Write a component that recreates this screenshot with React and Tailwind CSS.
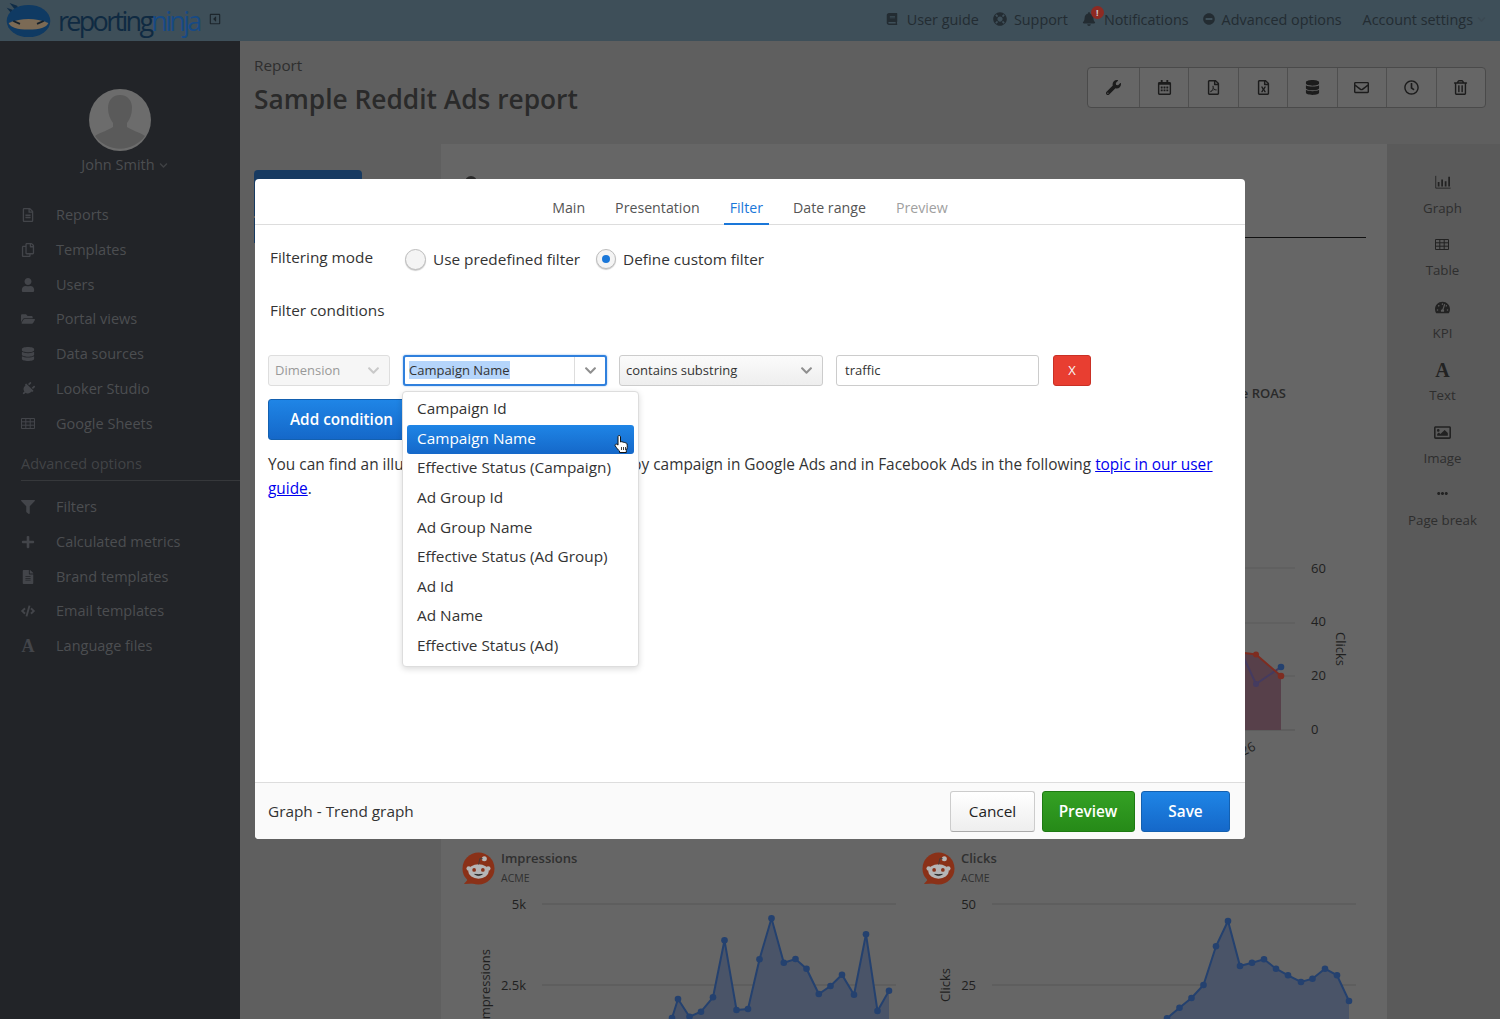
import React from 'react';
import {
  FaBook, FaLifeRing, FaBell, FaMinusCircle, FaChevronDown, FaWrench, FaRegCalendarAlt, FaRegFilePdf,
  FaRegFileExcel, FaDatabase, FaRegEnvelope, FaRegClock, FaRegTrashAlt, FaRegFileAlt, FaRegCopy, FaUser,
  FaFolderOpen, FaPlug, FaFilter, FaPlus, FaFileAlt, FaCode, FaTachometerAlt,
  FaRegImage, FaEllipsisH, FaRegCaretSquareLeft,
} from 'react-icons/fa';

const SerifA = ({ className }) => (
  <span className={`font-['Liberation_Serif',serif] font-bold leading-none ${className}`}>A</span>
);

const GridIcon = ({ className }) => (
  <svg viewBox="0 0 14 11" className={className} fill="none" stroke="currentColor" strokeWidth="1">
    <path d="M.5.5h13v10H.5zM.5 3.800h13M.5 7.200h13M4.800.5v10M9.200.5v10" />
  </svg>
);

const AngledPlug = ({ className }) => <FaPlug className={`rotate-45 ${className}`} />;

const mainNav = [
  [FaRegFileAlt, 'Reports', 'h-[34px]'],
  [FaRegCopy, 'Templates', 'h-[35px]'],
  [FaUser, 'Users', 'h-[35px]'],
  [FaFolderOpen, 'Portal views', 'h-[34px]'],
  [FaDatabase, 'Data sources', 'h-[35px]'],
  [AngledPlug, 'Looker Studio', 'h-[35px]'],
  [GridIcon, 'Google Sheets', 'h-[35px]'],
];

const advancedNav = [
  [FaFilter, 'Filters', 'h-[34px]'],
  [FaPlus, 'Calculated metrics', 'h-[35px]'],
  [FaFileAlt, 'Brand templates', 'h-[35px]'],
  [FaCode, 'Email templates', 'h-[34px]'],
  [SerifA, 'Language files', 'h-[35px]'],
];

const toolbar = [FaWrench, FaRegCalendarAlt, FaRegFilePdf, FaRegFileExcel, FaDatabase, FaRegEnvelope, FaRegClock, FaRegTrashAlt];

const dropdownItems = [
  'Campaign Id', 'Campaign Name', 'Effective Status (Campaign)', 'Ad Group Id', 'Ad Group Name',
  'Effective Status (Ad Group)', 'Ad Id', 'Ad Name', 'Effective Status (Ad)',
];

const impressionPoints = [[230, 125], [236, 106], [247.5, 123.7], [259, 118.7], [271, 104.3], [282.5, 47.3], [294.5, 117], [306, 116], [317.5, 66.3], [329.5, 25.3], [341.8, 69.7], [353.5, 66], [364.5, 75.7], [376.8, 101], [388.5, 93], [400, 81.7], [412, 101.7], [424, 41.3], [435.5, 118], [447, 97.7]];
const clickPoints = [[245, 125.3], [257.5, 114.7], [269.5, 105], [281.5, 92], [294, 53.3], [306, 28], [318, 73], [330, 69.7], [342, 66.3], [354, 75.7], [366, 82.3], [379, 89], [390.5, 85.7], [403, 75.7], [415, 82.3], [427, 108]];

const GraphIcon = ({ className }) => (
  <svg viewBox="0 0 18 16" className={className} fill="none">
    <path d="M.7 1v14h17" stroke="currentColor" strokeWidth="1" />
    <path d="M3 8h2v5H3zM7 5h2v8H7zM11 7h2v6h-2zM15 2h2v11h-2z" fill="currentColor" />
  </svg>
);

const HeadLogo = () => (
  <svg viewBox="0 0 48 38" className="h-[36px] w-[47px] shrink-0">
    <path d="M9 6 L4 0 L12 3 L14 7z M7 7 L1 5 L6 11z" fill="#0f2c47" />
    <ellipse cx="24" cy="19" rx="23" ry="17" fill="#0f3a63" />
    <path d="M3 21 Q24 13 45 21 Q42 28 24 28 Q6 28 3 21z" fill="#7b6a55" />
    <path d="M8 19l7 3M40 19l-7 3" stroke="#14202b" strokeWidth="2" />
  </svg>
);

const RedditLogo = () => (
  <svg viewBox="0 0 34 34" className="h-[33px] w-[33px] shrink-0">
    <circle cx="17" cy="17" r="16.5" fill="#8a3118" />
    <path d="M2 33l5-6 6 5.500z" fill="#8a3118" />
    <ellipse cx="17" cy="20" rx="10.500" ry="7.500" fill="#b5b5b5" />
    <circle cx="7" cy="17" r="2.400" fill="#b5b5b5" />
    <circle cx="27" cy="17" r="2.400" fill="#b5b5b5" />
    <circle cx="23" cy="7" r="2.600" fill="#b5b5b5" />
    <path d="M17 13l1.500-6.500 3 .5" stroke="#3a3a3a" strokeWidth=".8" fill="none" />
    <circle cx="12.500" cy="18.500" r="1.900" fill="#8a3118" />
    <circle cx="21.500" cy="18.500" r="1.900" fill="#8a3118" />
    <path d="M13 23q4 2.600 8 0q-4 .6-8 0z" fill="#222" stroke="#222" strokeWidth=".7" />
  </svg>
);

const HandCursor = () => (
  <svg viewBox="0 0 16 20" className="absolute right-[4px] top-[9px] h-[20px] w-[16px]">
    <path d="M5 1.500c1 0 1.500.7 1.500 1.500v5l1-.3c.8 0 1.200.2 1.500.7.7-.3 1.600-.2 2 .5.800-.3 1.800.2 2 1 .5 2.500.3 4.600-.7 6.600v2H5.500v-1.500C4 16 2.800 14 1.300 12c-.6-.9 0-1.900 1-1.900.6 0 1.200.5 1.700 1V3c0-.8.200-1.500 1-1.500z" fill="#fff" stroke="#111" strokeWidth="1" />
    <path d="M7.500 13v3M9.500 13v3M11.500 13v3" stroke="#111" strokeWidth=".8" />
  </svg>
);

const AreaChart = ({ points, left, right, ticks, label, labelX, labelY }) => {
  const line = points.map(([x, y]) => `${x},${y}`).join(' ');
  const first = points[0][0];
  const last = points[points.length - 1][0];
  return (
    <svg viewBox="0 0 460 126" className="h-[126px] w-[460px] shrink-0">
      {ticks.map(([text, y]) => (
        <g key={text}>
          <line x1={left} x2={right} y1={y} y2={y} stroke="#575757" strokeWidth="1" />
          <text x={left - 16} y={y + 5} textAnchor="end" fontSize="13" fill="#1f1f1f">{text}</text>
        </g>
      ))}
      <polygon points={`${first},126 ${line} ${last},126`} fill="#4a5468" />
      <polyline points={line} fill="none" stroke="#24416f" strokeWidth="2" />
      {points.map(([x, y]) => <circle key={x} cx={x} cy={y} r="3.300" fill="#24416f" />)}
      <text transform={`translate(${labelX} ${labelY}) rotate(-90)`} fontSize="13" fill="#1f1f1f">{label}</text>
    </svg>
  );
};

const ChartPanel = ({ title, children }) => (
  <div className="w-[460px] shrink-0">
    <div className="flex h-[41px] items-start gap-[6px]">
      <RedditLogo />
      <div className="-mt-[4px]">
        <div className="text-[13px] font-semibold leading-[20px] text-[#303030]">{title}</div>
        <div className="text-[10.500px] leading-[20px] text-[#303030]">ACME</div>
      </div>
    </div>
    {children}
  </div>
);

const SideItem = ({ Icon, label, h }) => (
  <div className={`flex items-center ${h}`}>
    <span className="flex w-[14px] items-center justify-center text-[#43454a]">
      <Icon className={Icon === SerifA ? 'text-[18px]' : Icon === GridIcon ? 'h-[11px] w-[14px]' : 'text-[14px]'} />
    </span>
    <span className="ml-[21px]">{label}</span>
  </div>
);

const App = () => {
  return (
    <div className="relative h-[1019px] w-full overflow-hidden bg-[#5f5f5f] font-['Open_Sans',sans-serif] text-[#2c2c2c]">
      {/* top bar */}
      <header className="flex h-[41px] items-center bg-[#3e4f59] pl-[5px] pr-[14px] text-[14.400px] text-[#232c32]">
        <HeadLogo />
        <span className="ml-[6px] text-[27px] leading-none tracking-[-2.700px] text-[#0f2a42]">reporting</span>
        <span className="text-[27px] leading-none tracking-[-2.700px] text-[#174a85]">ninja</span>
        <FaRegCaretSquareLeft className="ml-[9px] -mt-[3px] text-[12px] text-[#1d262c]" />
        <nav className="ml-auto flex items-center pb-[2px]">
          <FaBook className="text-[12px]" />
          <span className="ml-[9px]">User guide</span>
          <FaLifeRing className="ml-[14px] text-[14px]" />
          <span className="ml-[7px]">Support</span>
          <span className="relative ml-[14px]">
            <FaBell className="text-[14px]" />
            <span className="absolute -right-[8px] -top-[6px] flex h-[13px] w-[13px] items-center justify-center rounded-full bg-[#8e2a22] text-[9px] font-bold leading-none text-[#c9c9c9]">!</span>
          </span>
          <span className="ml-[8px]">Notifications</span>
          <FaMinusCircle className="ml-[14px] text-[12px]" />
          <span className="ml-[7px]">Advanced options</span>
          <span className="ml-[21px]">Account settings</span>
          <FaChevronDown className="ml-[4px] text-[9px] text-[#3b4952]" />
        </nav>
      </header>

      <div className="flex h-[978px]">
        {/* sidebar */}
        <aside className="w-[240px] shrink-0 bg-[#222428] text-[14.500px] text-[#4c4e51]">
          <div className="flex flex-col items-center pt-[48px]">
            <div className="relative h-[62px] w-[62px] overflow-hidden rounded-full bg-[#6c6c6c]">
              <svg viewBox="0 0 62 62" className="h-full w-full">
                <path d="M31 6c8 0 12 6 12 13 0 6-2 11-5 15v4c4 3 12 5 18 9a31 31 0 0 1-50 0c6-4 14-6 18-9v-4c-3-4-5-9-5-15 0-7 4-13 12-13z" fill="#5a5a5a" />
              </svg>
            </div>
            <div className="mt-[2px] flex items-center gap-[4px] pl-[9px] text-[14.500px] leading-[24px]">
              John Smith <FaChevronDown className="text-[9px] text-[#3f4144]" />
            </div>
          </div>
          <nav className="mt-[21px] pl-[21px]">
            {mainNav.map(([Icon, label, h]) => <SideItem key={label} Icon={Icon} label={label} h={h} />)}
            <div className="mt-[3px] h-[37px] border-b border-[#36383b] pt-[10px] leading-[20px] text-[#414346]">Advanced options</div>
            <div className="mt-[9px]">
              {advancedNav.map(([Icon, label, h]) => <SideItem key={label} Icon={Icon} label={label} h={h} />)}
            </div>
          </nav>
        </aside>

        {/* main area */}
        <main className="min-w-0 flex-1 pl-[14px]">
          <div className="flex h-[103px] items-start justify-between pr-[14px] pt-[12px]">
            <div>
              <div className="text-[15.300px] leading-[24px] text-[#2e2e2e]">Report</div>
              <h1 className="mt-[3px] text-[26.300px] font-semibold leading-[38px] text-[#2a2a2a]">Sample Reddit Ads report</h1>
            </div>
            <div className="mt-[14px] flex h-[41px] w-[399px] rounded-[4px] border border-[#4a4a4a] bg-[#666666]">
              {toolbar.map((Icon, i) => (
                <div key={i} className="flex flex-1 items-center justify-center border-r border-[#4f4f4f] text-[15px] text-[#1c1c1c] first:w-[52px] first:flex-none last:border-r-0">
                  <Icon />
                </div>
              ))}
            </div>
          </div>

          <div className="flex h-[875px]">
            <div className="w-[187px] shrink-0 pt-[26px]">
              <div className="h-[46px] w-[108px] rounded-t-[4px] bg-[#173a61]" />
              <div className="mt-[2px] h-[25px] w-[108px] bg-[#173a61]" />
            </div>
            <section className="h-full w-[946px] shrink-0 bg-[#666666] px-[21px]">
              <div className="h-[94px] overflow-hidden border-b border-[#111111] pl-[3px] pt-[32px]">
                <div className="h-[12px] w-[12px] rounded-full bg-[#2a2a2a]" />
              </div>
              <div className="pt-[142px] text-right">
                <span className="mr-[80px] text-[13px] font-semibold text-[#2a2a2a]">Average ROAS</span>
              </div>
              <div className="relative h-[448px]">
                <svg viewBox="0 0 240 240" className="absolute right-[-21px] top-[144px] h-[240px] w-[240px]">
                  {[20, 75, 128].map((y) => <line key={y} x1="90" x2="148" y1={y} y2={y} stroke="#5a5a5a" />)}
                  <line x1="90" x2="148" y1="182" y2="182" stroke="#555555" />
                  <polygon points="90,104 109,106.500 134,128 134,182 90,182" fill="#57404a" />
                  <polyline points="90,95 109,136 134,119" fill="none" stroke="#443b60" strokeWidth="2" />
                  <polyline points="90,104 109,106.500 134,128" fill="none" stroke="#7e2c20" strokeWidth="2" />
                  <circle cx="134" cy="119" r="3.300" fill="#24416f" />
                  <circle cx="109" cy="136" r="3" fill="#443b60" />
                  <circle cx="109" cy="106.500" r="3" fill="#7e2c20" />
                  <circle cx="134" cy="128" r="3.300" fill="#7e2c20" />
                  {[['60', 25], ['40', 78], ['20', 132], ['0', 186]].map(([t, y]) => (
                    <text key={t} x="164" y={y} fontSize="13" fill="#1f1f1f">{t}</text>
                  ))}
                  <text transform="translate(189 84) rotate(90)" fontSize="13" fill="#1f1f1f">Clicks</text>
                  <text transform="translate(96 208) rotate(-25)" fontSize="13" fill="#1f1f1f">26</text>
                </svg>
              </div>
              <div className="flex">
                <ChartPanel title="Impressions">
                  <div className="-ml-[20px]">
                    <AreaChart points={impressionPoints} left={100} right={454} ticks={[['5k', 11], ['2.5k', 92]]} label="Impressions" labelX={48} labelY={130} />
                  </div>
                </ChartPanel>
                <ChartPanel title="Clicks">
                  <AreaChart points={clickPoints} left={70} right={434} ticks={[['50', 11], ['25', 92]]} label="Clicks" labelX={28} labelY={109} />
                </ChartPanel>
              </div>
            </section>
            <aside className="flex-1 bg-[#5a5a5a] pt-[26px]">
              <div className="flex w-[111px] flex-col items-center text-[13.300px] leading-[20px] text-[#2e2e2e] [&>div]:flex [&>div]:h-[62.600px] [&>div]:flex-col [&>div]:items-center">
                <div><span className="flex h-[24px] items-center text-[#222222]"><GraphIcon className="h-[14px] w-[18px]" /></span><span className="mt-[3.500px]">Graph</span></div>
                <div><span className="flex h-[24px] items-center text-[#222222]"><GridIcon className="h-[11px] w-[14px]" /></span><span className="mt-[3.500px]">Table</span></div>
                <div><span className="flex h-[24px] items-center text-[#222222]"><FaTachometerAlt className="text-[15px]" /></span><span className="mt-[3.500px]">KPI</span></div>
                <div><span className="flex h-[24px] items-center text-[#222222]"><SerifA className="text-[20px]" /></span><span className="mt-[3.500px]">Text</span></div>
                <div><span className="flex h-[24px] items-center text-[#222222]"><FaRegImage className="text-[17px]" /></span><span className="mt-[3.500px]">Image</span></div>
                <div><span className="flex h-[24px] items-center text-[#222222]"><FaEllipsisH className="-mt-[2px] text-[11px]" /></span><span className="mt-[3.500px]">Page break</span></div>
              </div>
            </aside>
          </div>
        </main>
      </div>

      {/* modal */}
      <div className="absolute left-[255px] top-[179px] flex h-[660px] w-[990px] flex-col rounded-[4px] bg-white text-[15.350px] text-[#333333]">
        <div className="flex h-[46px] items-end justify-center gap-[18px] border-b border-[#dddddd] text-[14.200px] text-[#555555]">
          <span className="px-[6px] pb-[6px] leading-[20px]">Main</span>
          <span className="px-[6px] pb-[6px] leading-[20px]">Presentation</span>
          <span className="-mb-px border-b-2 border-[#1a77d9] px-[6px] pb-[5px] leading-[20px] text-[#1a77d9]">Filter</span>
          <span className="px-[6px] pb-[6px] leading-[20px]">Date range</span>
          <span className="px-[6px] pb-[6px] leading-[20px] text-[#a0a0a0]">Preview</span>
        </div>

        <div className="relative flex-1 px-[13px]">
          <div className="mt-[23px] flex h-[22px] items-center pl-[2px]">
            <span className="-mt-[5px] w-[135px] leading-[22px]">Filtering mode</span>
            <span className="h-[21px] w-[21px] rounded-full border border-[#bdbdbd] bg-[#f4f4f4] shadow-[0_1px_1px_rgba(0,0,0,0.2)]" />
            <span className="ml-[7px]">Use predefined filter</span>
            <span className="ml-[16px] flex h-[20px] w-[20px] items-center justify-center rounded-full border border-[#bdbdbd] bg-[#f4f4f4] shadow-[0_1px_1px_rgba(0,0,0,0.2)]">
              <span className="h-[8px] w-[8px] rounded-full bg-[#1a77d9]" />
            </span>
            <span className="ml-[7px]">Define custom filter</span>
          </div>
          <div className="mt-[29px] pl-[2px] leading-[22px]">Filter conditions</div>

          <div className="mt-[34px] flex h-[31px] items-stretch text-[13px]">
            <div className="flex w-[122px] items-center justify-between rounded-[3px] border border-[#dedede] bg-[#f6f6f6] pl-[6px] pr-[9px] text-[#999999]">
              Dimension <FaChevronDown className="text-[13px] text-[#c9c9c9]" />
            </div>
            <div className="ml-[13px] flex w-[204px] items-center rounded-[3px] border-2 border-[#2f80dd] bg-white pl-[4px] shadow-[0_0_2px_rgba(47,128,221,0.6)]">
              <span className="-mt-px bg-[#b5d5fb] leading-[18px]">Campaign Name</span>
              <span className="ml-auto flex h-full w-[31px] items-center justify-center border-l border-[#dddddd]">
                <FaChevronDown className="text-[13px] text-[#8f8f8f]" />
              </span>
            </div>
            <div className="ml-[12px] flex w-[204px] items-center justify-between rounded-[3px] border border-[#cccccc] bg-gradient-to-b from-[#fbfbfb] to-[#eeeeee] pl-[6px] pr-[9px]">
              contains substring <FaChevronDown className="text-[13px] text-[#8f8f8f]" />
            </div>
            <div className="ml-[13px] flex w-[203px] items-center rounded-[3px] border border-[#cccccc] bg-white pl-[8px]">traffic</div>
            <div className="ml-[14px] flex w-[38px] items-center justify-center rounded-[3px] border border-[#c93025] bg-[#e83e31] text-[#f7f7f7]">X</div>
          </div>

          <button className="mt-[13px] block h-[41px] w-[148px] rounded-[3px] border border-[#1360b0] bg-gradient-to-b from-[#1f85e6] to-[#1568c9] pl-[21px] text-left text-[15.300px] font-semibold text-white">
            Add condition
          </button>

          <p className="mt-[13px] w-[955px] text-[15.400px] leading-[24px]">
            You can find an illustration of how to apply a <span className="pr-[4px]">filter</span> by campaign in Google Ads and in Facebook Ads in the following{' '}
            <span className="text-[#0000ee] underline">topic in our user guide</span>.
          </p>

          {/* open dimension list */}
          <ul className="absolute left-[147px] top-[166px] w-[237px] rounded-[4px] border border-[#dddddd] bg-white px-[4px] pb-[5px] pt-[3px] shadow-[0_2px_6px_rgba(0,0,0,0.15)]">
            {dropdownItems.map((item) => (
              item === 'Campaign Name' ? (
                <li key={item} className="relative flex h-[29.600px] items-center rounded-[3px] bg-gradient-to-b from-[#1f85e6] to-[#1568c9] pb-px pl-[10px] text-white">
                  {item}
                  <HandCursor />
                </li>
              ) : (
                <li key={item} className="flex h-[29.600px] items-center pb-[2px] pl-[10px]">{item}</li>
              )
            ))}
          </ul>
        </div>

        <div className="flex h-[57px] items-center justify-between rounded-b-[4px] border-t border-[#dddddd] bg-[#fafafa] pl-[13px] pr-[15px]">
          <span className="pt-px">Graph - Trend graph</span>
          <div className="flex gap-[6.500px]">
            <button className="h-[41px] w-[85px] rounded-[3px] border border-[#cccccc] border-b-[#aaaaaa] bg-gradient-to-b from-[#ffffff] to-[#eeeeee] pt-px text-[#222222]">Cancel</button>
            <button className="h-[41px] w-[93px] rounded-[3px] border border-[#1d7a12] bg-gradient-to-b from-[#34a124] to-[#268a18] pt-px font-semibold text-white">Preview</button>
            <button className="h-[41px] w-[89px] rounded-[3px] border border-[#1360b0] bg-gradient-to-b from-[#1f85e6] to-[#1568c9] pt-px font-semibold text-white">Save</button>
          </div>
        </div>
      </div>
    </div>
  );
};

export default App;
